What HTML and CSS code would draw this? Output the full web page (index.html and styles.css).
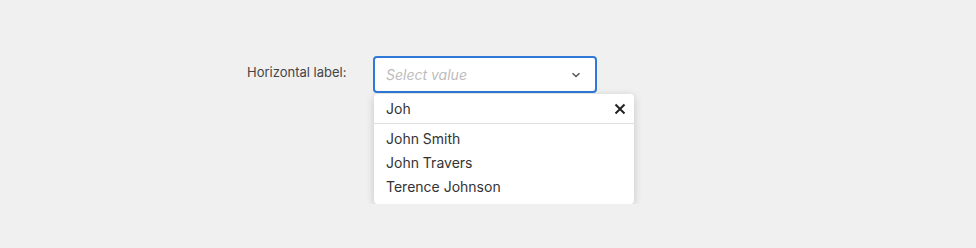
FILE: index.html
```html
<!DOCTYPE html>
<html lang="en">
<head>
    <meta charset="UTF-8">
    <meta name="viewport" content="width=device-width, initial-scale=1.0">
    <title>Select</title>
    <link rel="stylesheet" href="styles.css">
</head>
<body>
    <div class="form-row">
        <label class="form-label" for="picker">Horizontal label:</label>
        <div class="select">
            <div class="select-box" id="picker">
                <span class="placeholder">Select value</span>
                <svg class="chevron" width="10" height="6" viewBox="0 0 10 6">
                    <path d="M1.5 1.2 L5 4.5 L8.5 1.2" fill="none" stroke="#555" stroke-width="1.5"/>
                </svg>
            </div>

            <!-- Dropdown -->
            <div class="dropdown">
                <div class="search">
                    <span class="search-text">Joh</span>
                    <svg class="clear" width="12" height="12" viewBox="0 0 12 12">
                        <path d="M1.5 1.5 L10.5 10.5 M10.5 1.5 L1.5 10.5" stroke="#222" stroke-width="2"/>
                    </svg>
                </div>
                <ul class="options">
                    <li>John Smith</li>
                    <li>John Travers</li>
                    <li>Terence Johnson</li>
                </ul>
            </div>
        </div>
    </div>
</body>
</html>
```

FILE: styles.css
```css
html, body {
    min-height: 100%;
}
body {
    margin: 0;
    background-color: #f0f0f0;
    font-family: Inter, "Noto Sans", Arial, sans-serif;
    color: #333;
}
.form-row {
    display: flex;
    align-items: flex-start;
    padding: 56px 0 0 247px;
}
.form-label {
    width: 126px;
    line-height: 33px;
    font-size: 13px;
    color: #444;
}
.select {
    display: flex;
    flex-direction: column;
    align-items: flex-start;
}
.select-box {
    box-sizing: border-box;
    width: 224px;
    height: 37px;
    border: 2px solid #2f7ad8;
    border-radius: 4px;
    background: #fff;
    display: flex;
    align-items: center;
    justify-content: space-between;
    padding: 0 14px 0 11px;
}
.placeholder {
    font-size: 14px;
    font-style: italic;
    color: #bcbcbc;
}
.chevron {
    display: block;
}
.dropdown {
    width: 260px;
    margin: 1px 0 0 1px;
    background: #fff;
    border-radius: 4px;
    box-shadow: 0 2px 8px rgba(0, 0, 0, 0.18);
}
.search {
    height: 29px;
    display: flex;
    align-items: center;
    justify-content: space-between;
    padding: 0 8px 0 12px;
    border-bottom: 1px solid #e0e0e0;
    font-size: 14px;
    color: #333;
}
.clear {
    display: block;
}
.options {
    list-style: none;
    margin: 0;
    padding: 3px 0 5px;
}
.options li {
    height: 24px;
    line-height: 24px;
    padding: 0 12px;
    font-size: 14px;
    color: #333;
}
```
